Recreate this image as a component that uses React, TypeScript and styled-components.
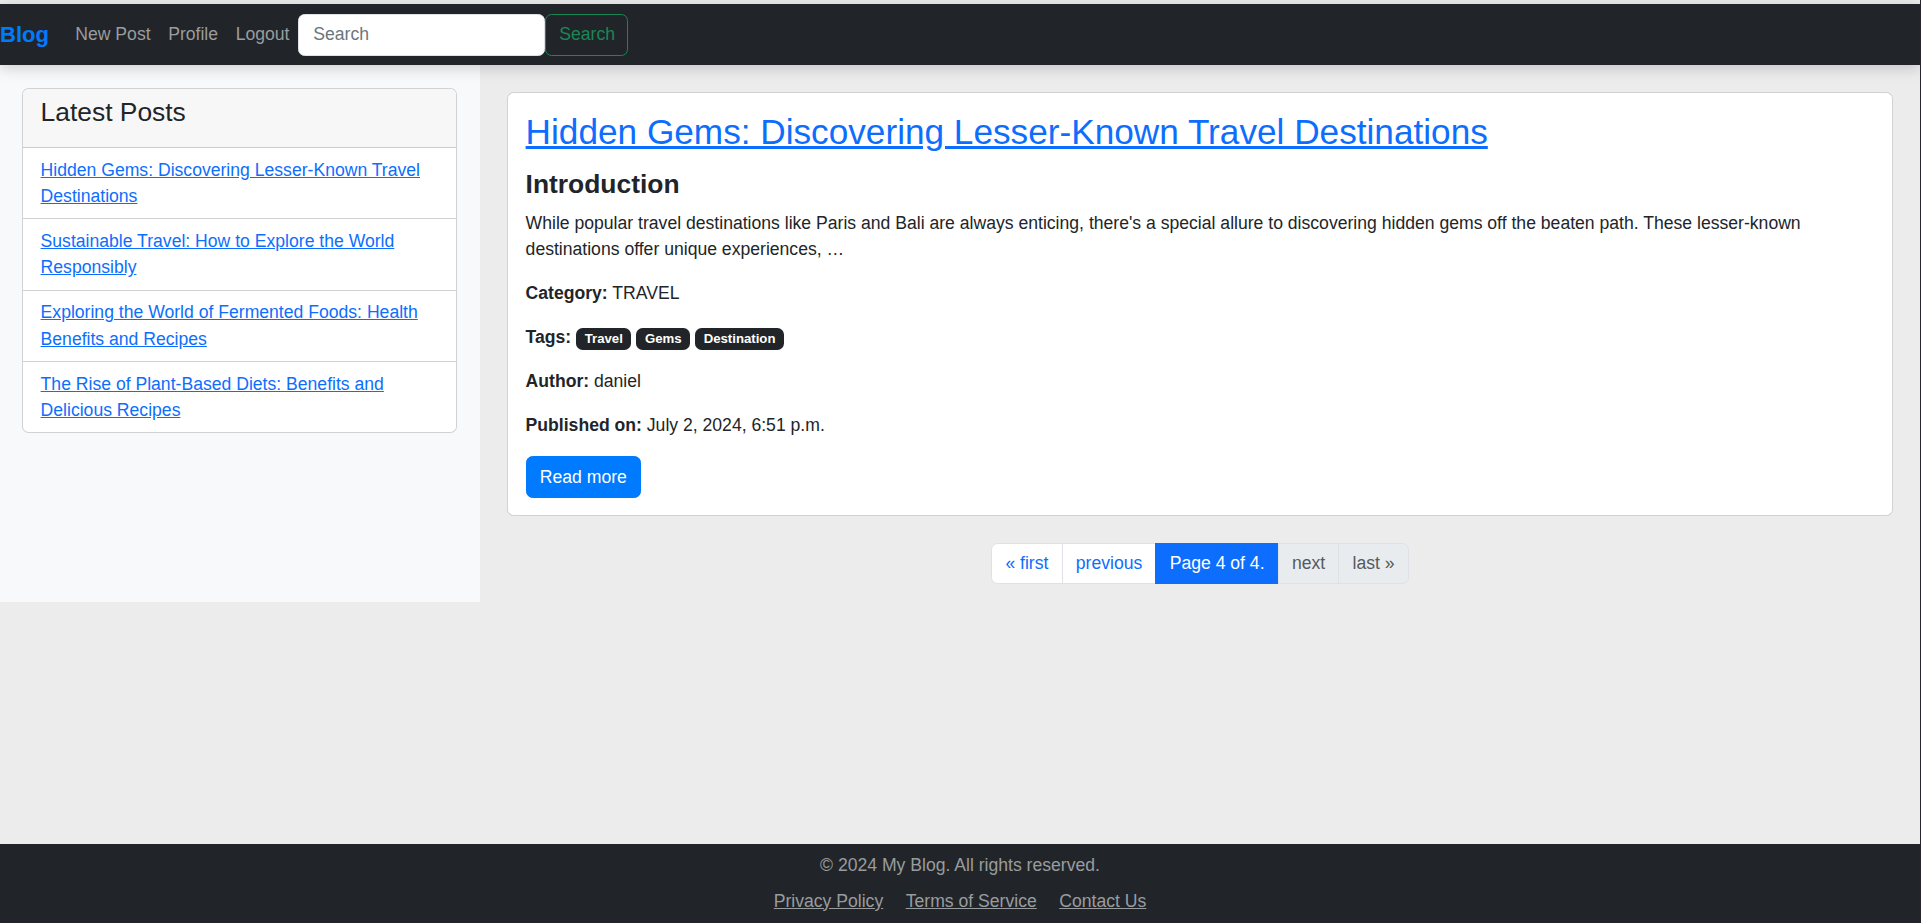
import React from "react";
import styled, { createGlobalStyle } from "styled-components";

const GlobalStyle = createGlobalStyle`
  html, body { margin: 0; padding: 0; }
  *, *::before, *::after { box-sizing: border-box; }
  body {
    font-family: "Liberation Sans", Arial, Helvetica, sans-serif;
    font-size: 17.6px;
    line-height: 1.5;
    color: #212529;
    background: #ececec;
  }
`;

const Page = styled.div`
  height: 100vh;
  min-height: 923px;
  display: flex;
  flex-direction: column;
  padding-top: 4px;
  background: #ececec;
  border-right: 1px solid #23272b;
  overflow: hidden;
`;

const Navbar = styled.nav`
  height: 61px;
  flex-shrink: 0;
  background: #212529;
  display: flex;
  align-items: center;
  position: relative;
  z-index: 2;
  box-shadow: 0 3px 14px rgba(0, 0, 0, 0.18);
`;

const Brand = styled.a`
  font-size: 22px;
  font-weight: 700;
  color: #007bff;
  text-decoration: none;
  margin-right: 17.6px;
  line-height: 1.5;
`;

const NavLinks = styled.div`
  display: flex;
  align-items: center;
`;

const NavLink = styled.a`
  color: #9b9c9e;
  text-decoration: none;
  padding: 0 8.8px;
  font-size: 17.6px;
`;

const SearchForm = styled.form`
  display: flex;
  align-items: center;
`;

const SearchInput = styled.input`
  width: 247px;
  height: 42px;
  border: 1px solid #dee2e6;
  border-radius: 6.6px;
  padding: 0 14px;
  font-family: inherit;
  font-size: 17.6px;
  color: #212529;
  background: #fff;
  outline: none;
  &::placeholder { color: #6c757d; }
`;

const SearchButton = styled.button`
  height: 42px;
  width: 83px;
  border: 1px solid #198754;
  border-radius: 6.6px;
  background: transparent;
  color: #198754;
  font-family: inherit;
  font-size: 17.6px;
  padding: 0 13px;
`;

const Main = styled.main`
  flex: 1;
  min-height: 0;
`;

const Row = styled.div`
  display: flex;
  align-items: stretch;
`;

const Sidebar = styled.aside`
  width: 25%;
  background: #f8f9fa;
  padding: 22.7px 23px 0 22px;
`;

const SideCard = styled.div`
  background: #fff;
  border: 1px solid rgba(0, 0, 0, 0.175);
  border-radius: 6.6px;
  overflow: hidden;
`;

const SideHeader = styled.div`
  background: #f7f7f7;
  border-bottom: 1px solid rgba(0, 0, 0, 0.175);
  padding: 8.8px 17.6px;
`;

const SideTitle = styled.h4`
  margin: 0 0 8.8px;
  font-size: 26.4px;
  font-weight: 400;
  line-height: 1.2;
  color: #212529;
`;

const SideList = styled.ul`
  list-style: none;
  margin: 0;
  padding: 0;
`;

const SideItem = styled.li`
  padding: 8.8px 17.6px;
  & + & { border-top: 1px solid rgba(0, 0, 0, 0.175); }
`;

const BlueLink = styled.a`
  color: #0d6efd;
  text-decoration: underline;
`;

const Content = styled.section`
  width: 75%;
  padding: 27px 27px 17.6px;
`;

const PostCard = styled.article`
  background: #fff;
  border: 1px solid rgba(0, 0, 0, 0.175);
  border-radius: 6.6px;
  padding: 17.6px;
`;

const PostTitle = styled.h2`
  margin: 0 0 15.7px;
  font-size: 35.2px;
  font-weight: 400;
  line-height: 1.2;
`;

const SectionHeading = styled.h3`
  margin: 0 0 9.8px;
  font-size: 26.4px;
  font-weight: 700;
  line-height: 1.2;
  color: #212529;
`;

const Para = styled.p`
  margin: 0 0 17.6px;
`;

const Badge = styled.span`
  display: inline-block;
  background: #212529;
  color: #fff;
  font-size: 13.2px;
  font-weight: 700;
  line-height: 1;
  padding: 4.6px 8.6px;
  border-radius: 6.6px;
  vertical-align: baseline;
`;

const ReadMore = styled.a`
  display: inline-block;
  background: #007bff;
  color: #fff;
  text-decoration: none;
  border-radius: 6.6px;
  padding: 6.6px 13.2px;
  border: 1px solid #007bff;
  line-height: 1.5;
`;

const Pager = styled.nav`
  display: flex;
  justify-content: center;
  margin-top: 26.4px;
`;

const PageList = styled.ul`
  display: flex;
  list-style: none;
  margin: 0;
  padding: 0;
`;

type Variant = "link" | "active" | "disabled";

const PageItem = styled.li<{ $variant: Variant }>`
  padding: 6.6px 13.2px;
  border: 1px solid ${(p) => (p.$variant === "active" ? "#0d6efd" : "#dee2e6")};
  background: ${(p) =>
    p.$variant === "active" ? "#0d6efd" : p.$variant === "disabled" ? "#e9ecef" : "#fff"};
  color: ${(p) =>
    p.$variant === "active" ? "#fff" : p.$variant === "disabled" ? "#555a5f" : "#0d6efd"};
  line-height: 1.5;
  & + & { margin-left: -1px; }
  &:first-child { border-radius: 6.6px 0 0 6.6px; }
  &:last-child { border-radius: 0 6.6px 6.6px 0; }
`;

const Footer = styled.footer`
  flex-shrink: 0;
  height: 79px;
  background: #212529;
  color: #999c9f;
  text-align: center;
  padding-top: 8.4px;
`;

const Copyright = styled.p`
  margin: 0 0 8.8px;
`;

const FooterLinks = styled.div`
  display: flex;
  justify-content: center;
  gap: 22.5px;
`;

const FooterLink = styled.a`
  color: #999c9f;
  text-decoration: underline;
`;

const latest = [
  "Hidden Gems: Discovering Lesser-Known Travel Destinations",
  "Sustainable Travel: How to Explore the World Responsibly",
  "Exploring the World of Fermented Foods: Health Benefits and Recipes",
  "The Rise of Plant-Based Diets: Benefits and Delicious Recipes",
];

const pages: { label: string; variant: Variant }[] = [
  { label: "« first", variant: "link" },
  { label: "previous", variant: "link" },
  { label: "Page 4 of 4.", variant: "active" },
  { label: "next", variant: "disabled" },
  { label: "last »", variant: "disabled" },
];

export default function App() {
  return (
    <>
      <GlobalStyle />
      <Page>
        <Navbar>
          <Brand href="#">Blog</Brand>
          <NavLinks>
            <NavLink href="#">New Post</NavLink>
            <NavLink href="#">Profile</NavLink>
            <NavLink href="#">Logout</NavLink>
          </NavLinks>
          <SearchForm onSubmit={(e) => e.preventDefault()}>
            <SearchInput placeholder="Search" />
            <SearchButton type="submit">Search</SearchButton>
          </SearchForm>
        </Navbar>
        <Main>
          <Row>
            <Sidebar>
              <SideCard>
                <SideHeader>
                  <SideTitle>Latest Posts</SideTitle>
                </SideHeader>
                <SideList>
                  {latest.map((t) => (
                    <SideItem key={t}>
                      <BlueLink href="#">{t}</BlueLink>
                    </SideItem>
                  ))}
                </SideList>
              </SideCard>
            </Sidebar>
            <Content>
              <PostCard>
                <PostTitle>
                  <BlueLink href="#">Hidden Gems: Discovering Lesser-Known Travel Destinations</BlueLink>
                </PostTitle>
                <SectionHeading>Introduction</SectionHeading>
                <Para>
                  While popular travel destinations like Paris and Bali are always enticing, there's a special
                  allure to discovering hidden gems off the beaten path. These lesser-known destinations offer
                  unique experiences, …
                </Para>
                <Para>
                  <strong>Category:</strong> TRAVEL
                </Para>
                <Para>
                  <strong>Tags:</strong> <Badge>Travel</Badge> <Badge>Gems</Badge> <Badge>Destination</Badge>
                </Para>
                <Para>
                  <strong>Author:</strong> daniel
                </Para>
                <Para>
                  <strong>Published on:</strong> July 2, 2024, 6:51 p.m.
                </Para>
                <ReadMore href="#">Read more</ReadMore>
              </PostCard>
              <Pager>
                <PageList>
                  {pages.map((p) => (
                    <PageItem key={p.label} $variant={p.variant}>
                      {p.label}
                    </PageItem>
                  ))}
                </PageList>
              </Pager>
            </Content>
          </Row>
        </Main>
        <Footer>
          <Copyright>© 2024 My Blog. All rights reserved.</Copyright>
          <FooterLinks>
            <FooterLink href="#">Privacy Policy</FooterLink>
            <FooterLink href="#">Terms of Service</FooterLink>
            <FooterLink href="#">Contact Us</FooterLink>
          </FooterLinks>
        </Footer>
      </Page>
    </>
  );
}
